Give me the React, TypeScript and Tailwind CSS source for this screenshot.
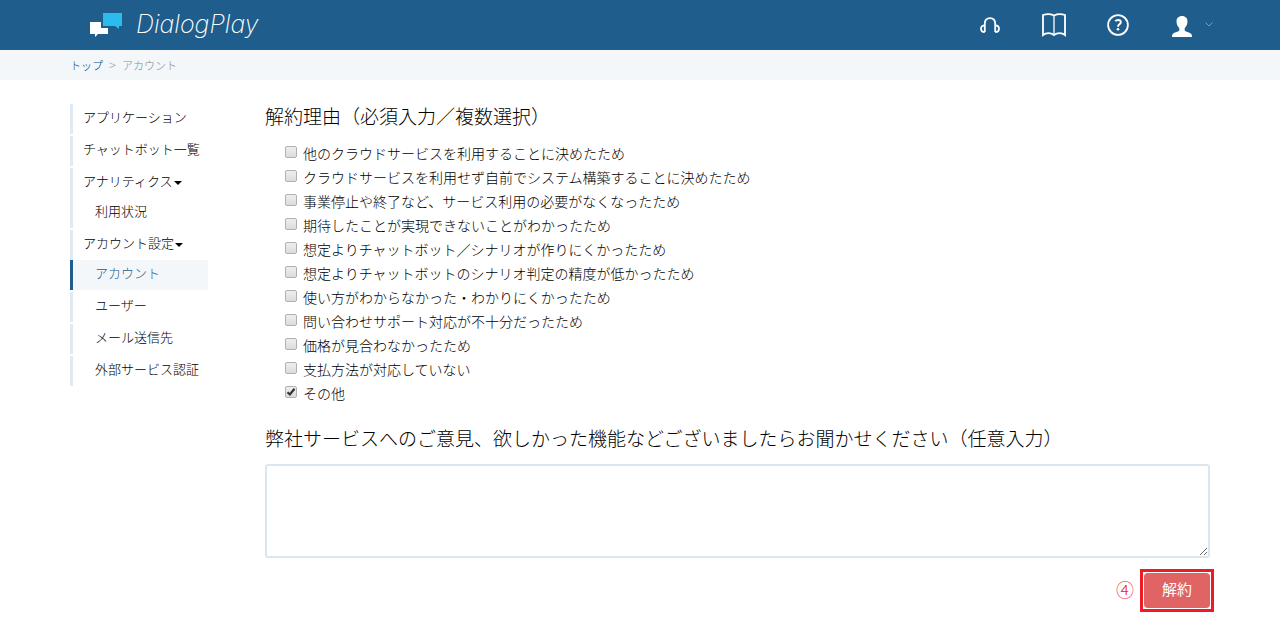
import { useState } from 'react';

const reasons = [
  '他のクラウドサービスを利用することに決めたため',
  'クラウドサービスを利用せず自前でシステム構築することに決めたため',
  '事業停止や終了など、サービス利用の必要がなくなったため',
  '期待したことが実現できないことがわかったため',
  '想定よりチャットボット／シナリオが作りにくかったため',
  '想定よりチャットボットのシナリオ判定の精度が低かったため',
  '使い方がわからなかった・わかりにくかったため',
  '問い合わせサポート対応が不十分だったため',
  '価格が見合わなかったため',
  '支払方法が対応していない',
  'その他',
];

type Item = { label: string; sub?: boolean; caret?: boolean; active?: boolean };

// Entries of one group share an unbroken bar on the left
const menu: Item[][] = [
  [{ label: 'アプリケーション' }],
  [{ label: 'チャットボット一覧' }],
  [{ label: 'アナリティクス', caret: true }, { label: '利用状況', sub: true }],
  [{ label: 'アカウント設定', caret: true }],
  [{ label: 'アカウント', sub: true, active: true }],
  [{ label: 'ユーザー', sub: true }],
  [{ label: 'メール送信先', sub: true }],
  [{ label: '外部サービス認証', sub: true }],
];

function Logo() {
  return (
    <svg width="33" height="25" viewBox="0 0 33 25" aria-hidden="true">
      <path d="M13 0h19v13h-3v3l-4-3H13z" fill="#2bbcee" />
      <path d="M0 9h11v6h7v6H8l-3 3v-3H0z" fill="#fff" />
    </svg>
  );
}

function HeadphonesIcon() {
  return (
    <svg width="20" height="17" viewBox="0 0 20 17" fill="none" stroke="#fff" strokeWidth="1.8">
      <path d="M4.800 15V6.800C4.800 3.400 6.800 1.200 10 1.200s5.200 2.200 5.200 5.600V15" />
      <path d="M4.800 8.300C2.200 8.300 1 9.800 1 11.700S2.200 15 4.800 15M15.200 8.300c2.600 0 3.800 1.500 3.800 3.400S17.800 15 15.200 15" />
    </svg>
  );
}

function BookIcon() {
  return (
    <svg width="24" height="24" viewBox="0 0 24 24" fill="none" stroke="#fff">
      <path d="M1 22V2c3-1 8-1 11 .5C15 1 20 1 23 2v20c-3-2.500-8-2.500-11 0-3-2.500-8-2.500-11 0z" strokeWidth="1.800" />
      <path d="M12 2v20" strokeWidth="1.300" />
    </svg>
  );
}

function HelpIcon() {
  return (
    <svg width="22" height="22" viewBox="0 0 22 22" fill="none" stroke="#fff">
      <circle cx="11" cy="11" r="9.900" strokeWidth="1.800" />
      <path d="M8.200 7.200c.8-.9 1.700-1.300 2.800-1.300 1.700 0 2.800.9 2.800 2.300 0 2.200-2.800 2.100-2.800 4.600" strokeWidth="2" />
      <circle cx="11" cy="15.300" r="1.300" fill="#fff" stroke="none" />
    </svg>
  );
}

function UserIcon() {
  return (
    <svg width="20" height="21" viewBox="0 0 20 21" fill="#fff">
      <path d="M10 0c3.400 0 5.500 2.200 5.500 5.600 0 3-1.200 5-2.800 6.600v2.300c1 1.300 5.500 2 6.600 3.500.5.700.7 1.800.7 3H0c0-1.200.2-2.300.7-3 1.100-1.500 5.600-2.200 6.600-3.500v-2.300C5.700 10.600 4.500 8.600 4.500 5.600 4.500 2.200 6.600 0 10 0z" />
    </svg>
  );
}

function Header() {
  return (
    <header className="bg-[#1f5d8c] px-5">
      <div className="mx-auto flex h-[50px] max-w-[1140px] items-center justify-between pl-5">
        <a href="#" className="flex items-center gap-[13px] font-['Inter',sans-serif] text-[25px] font-extralight text-white italic">
          <Logo />
          <span>DialogPlay</span>
        </a>
        <nav className="-mr-[3px] flex items-center">
          <a href="#" aria-label="サポート" className="mr-[42px]"><HeadphonesIcon /></a>
          <a href="#" aria-label="マニュアル" className="mr-[41px]"><BookIcon /></a>
          <a href="#" aria-label="ヘルプ" className="mr-[43px]"><HelpIcon /></a>
          <button type="button" aria-label="アカウントメニュー" className="flex items-center gap-[13px] pt-[3px]">
            <UserIcon />
            <svg width="8" height="5" viewBox="0 0 8 5" fill="none" stroke="#7f9fba" className="mb-1">
              <path d="M.5.5 4 4 7.5.5" />
            </svg>
          </button>
        </nav>
      </div>
    </header>
  );
}

function Sidebar() {
  return (
    <nav className="w-[138px] shrink-0 text-[13px]">
      <ul className="flex flex-col">
        {menu.map((group) => (
          <li key={group[0].label} className={group[0].active ? '' : 'not-first:mt-[2px]'}>
            {group.map((item) => (
              <a
                key={item.label}
                href="#"
                className={`flex h-[30px] items-center border-l-3 pb-1 whitespace-nowrap ${item.sub ? 'pl-[22px]' : 'pl-[10px]'} ${
                  item.active ? 'border-[#1f5d8c] bg-[#f3f7fa] text-[#1f5d8c]' : 'border-[#e1eaf2]'
                }`}
              >
                {item.label}
                {item.caret && <span className="mt-1 ml-px border-x-4 border-t-4 border-x-transparent border-t-black" />}
              </a>
            ))}
          </li>
        ))}
      </ul>
    </nav>
  );
}

type CheckboxProps = { label: string; checked: boolean; onChange: () => void };

function Checkbox({ label, checked, onChange }: CheckboxProps) {
  return (
    <label className="flex w-fit gap-[6px]">
      <span className="mt-[5px] grid h-3 w-3">
        <input
          type="checkbox"
          checked={checked}
          onChange={onChange}
          className="col-start-1 row-start-1 h-3 w-3 appearance-none rounded-[2px] border border-[#b0b0b0] bg-linear-to-b from-[#eee] to-[#dcdcdc]"
        />
        {checked && (
          <svg viewBox="0 0 12 12" fill="none" stroke="#333" strokeWidth="2.2" className="pointer-events-none col-start-1 row-start-1 h-3 w-3">
            <path d="M2.500 6.200 4.900 8.500 9.500 2.800" />
          </svg>
        )}
      </span>
      {label}
    </label>
  );
}

export default function App() {
  const [checked, setChecked] = useState<string[]>(['その他']);
  const [opinion, setOpinion] = useState('');

  const toggle = (reason: string) => {
    setChecked((prev) => (prev.includes(reason) ? prev.filter((r) => r !== reason) : [...prev, reason]));
  };

  return (
    <div className="bg-white font-['Noto_Sans_CJK_JP','Noto_Sans',sans-serif] font-light text-black">
      <Header />
      <div className="bg-[#f3f7fa] px-5">
        <ol className="mx-auto flex h-[30px] max-w-[1140px] items-center gap-[6px] text-[11px] text-[#888]">
          <li><a href="#" className="text-[#0f4c7a]">トップ</a></li>
          <li className="text-[13px] text-[#aaa]">&gt;</li>
          <li>アカウント</li>
        </ol>
      </div>
      <div className="px-5 pt-6">
        <div className="mx-auto flex max-w-[1140px] gap-[57px]">
          <Sidebar />
          <main className="min-w-0 flex-1">
            <fieldset>
              <legend className="text-[19px] leading-6">解約理由（必須入力／複数選択）</legend>
              <ul className="mt-[13px] pl-5 text-[14px] leading-6">
                {reasons.map((reason) => (
                  <li key={reason}>
                    <Checkbox label={reason} checked={checked.includes(reason)} onChange={() => toggle(reason)} />
                  </li>
                ))}
              </ul>
            </fieldset>
            <label htmlFor="opinion" className="mt-[21px] block text-[19px] leading-6">
              弊社サービスへのご意見、欲しかった機能などございましたらお聞かせください（任意入力）
            </label>
            <textarea
              id="opinion"
              value={opinion}
              onChange={(e) => setOpinion(e.target.value)}
              className="mt-[14px] block h-[94px] w-full resize-y rounded-[3px] border-2 border-[#dce6ee] p-2 text-[14px]"
            />
            <div className="-mr-1 mt-[11px] flex items-center justify-end gap-[6px]">
              <span className="pb-[3px] text-[18px] leading-6 text-[#ed1c24]">④</span>
              <div className="border-3 border-[#ed1c24] p-px">
                <button type="button" className="h-[35px] w-[66px] rounded bg-[#e06464] pb-[5px] text-[15px] leading-none font-normal text-white">
                  解約
                </button>
              </div>
            </div>
          </main>
        </div>
      </div>
    </div>
  );
}
